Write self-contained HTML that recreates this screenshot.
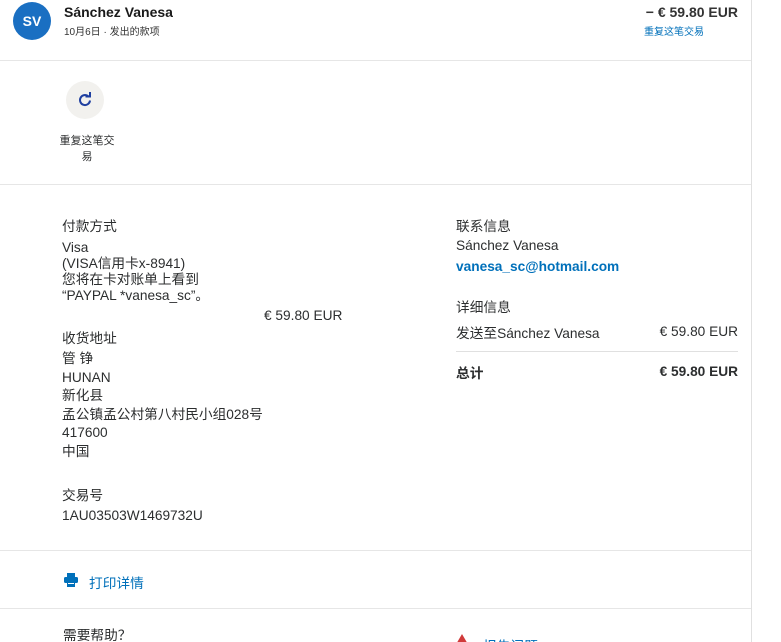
<!DOCTYPE html><html><head><meta charset="utf-8"><style>
html,body{margin:0;width:781px;height:642px;overflow:hidden}
body{background:#fff;font-family:"Liberation Sans","Noto Sans CJK SC",sans-serif;color:#2c2e2f;position:relative}
.a{position:absolute;white-space:nowrap}
.hr{position:absolute;left:0;width:751px;height:1px;background:#e6e6e6}
.t{font-size:13.7px}
.b{font-weight:bold}
.blue{color:#0070ba}
</style></head><body>
<div class="a" style="left:751px;top:0;width:1px;height:642px;background:#e0e0e0"></div>
<div class="a" style="left:13px;top:2px;width:38px;height:38px;border-radius:50%;background:#1a6fc2;color:#fff;font-weight:bold;font-size:14px;line-height:38px;text-align:center">SV</div>
<div class="a b" style="left:64px;top:4px;font-size:14px;color:#1a1a1a">Sánchez Vanesa</div>
<div class="a" style="left:64px;top:23px;font-size:10px;color:#333">10月6日 · 发出的款项</div>
<div class="a b" style="right:43px;top:4px;font-size:14px;color:#333">− € 59.80 EUR</div>
<div class="a blue" style="left:644px;top:23px;font-size:10px">重复这笔交易</div>
<div class="hr" style="top:60px"></div>
<div class="a" style="left:66px;top:81px;width:38px;height:38px;border-radius:50%;background:#f2f1ee"></div>
<svg class="a" style="left:77px;top:92px" width="16" height="16" viewBox="0 0 16 16"><path d="M13 8.5A5 5 0 1 1 11.3 4.3" fill="none" stroke="#1f3fa0" stroke-width="2"/><path d="M8.5 4.5h4.5V0" fill="none" stroke="#1f3fa0" stroke-width="2"/></svg>
<div class="a" style="left:58px;top:133px;font-size:11px;width:58px;text-align:center;white-space:normal;line-height:16px">重复这笔交易</div>
<div class="hr" style="top:184px"></div>
<div class="a t" style="left:62px;top:215px">付款方式</div>
<div class="a t" style="left:62px;top:240px;line-height:16px">Visa<br>(VISA信用卡x-8941)<br>您将在卡对账单上看到<br>“PAYPAL *vanesa_sc”。</div>
<div class="a t" style="left:264px;top:308px">€ 59.80 EUR</div>
<div class="a t" style="left:62px;top:327px">收货地址</div>
<div class="a t" style="left:62px;top:350px;line-height:18.5px">管 铮<br>HUNAN<br>新化县<br>孟公镇孟公村第八村民小组028号<br>417600<br>中国</div>
<div class="a t" style="left:62px;top:484px">交易号</div>
<div class="a t" style="left:62px;top:508px">1AU03503W1469732U</div>
<div class="a t" style="left:456px;top:215px">联系信息</div>
<div class="a t" style="left:456px;top:238px">Sánchez Vanesa</div>
<div class="a t b blue" style="left:456px;top:259px">vanesa_sc@hotmail.com</div>
<div class="a t" style="left:456px;top:296px">详细信息</div>
<div class="a t" style="left:456px;top:322px">发送至Sánchez Vanesa</div>
<div class="a t" style="right:43px;top:324px">€ 59.80 EUR</div>
<div class="a" style="left:456px;top:351px;width:282px;height:1px;background:#e0e0e0"></div>
<div class="a t b" style="left:456px;top:362px">总计</div>
<div class="a t b" style="right:43px;top:364px">€ 59.80 EUR</div>
<div class="hr" style="top:550px"></div>
<svg class="a" style="left:63px;top:572px" width="16" height="16" viewBox="0 0 16 16"><rect x="4" y="1" width="8" height="4" fill="#0070ba"/><rect x="1" y="5" width="14" height="6" rx="1.5" fill="#0070ba"/><rect x="4" y="10" width="8" height="5" fill="#0070ba"/><rect x="5" y="11" width="6" height="1" fill="#fff"/></svg>
<div class="a t blue" style="left:89px;top:572px">打印详情</div>
<div class="hr" style="top:608px"></div>
<div class="a t" style="left:63px;top:624px">需要帮助？</div>
<svg class="a" style="left:455px;top:634px" width="14" height="10"><path d="M7 0L14 12H0Z" fill="#d03a3a"/></svg>
<div class="a t blue" style="left:483px;top:635px">报告问题</div>
</body></html>
